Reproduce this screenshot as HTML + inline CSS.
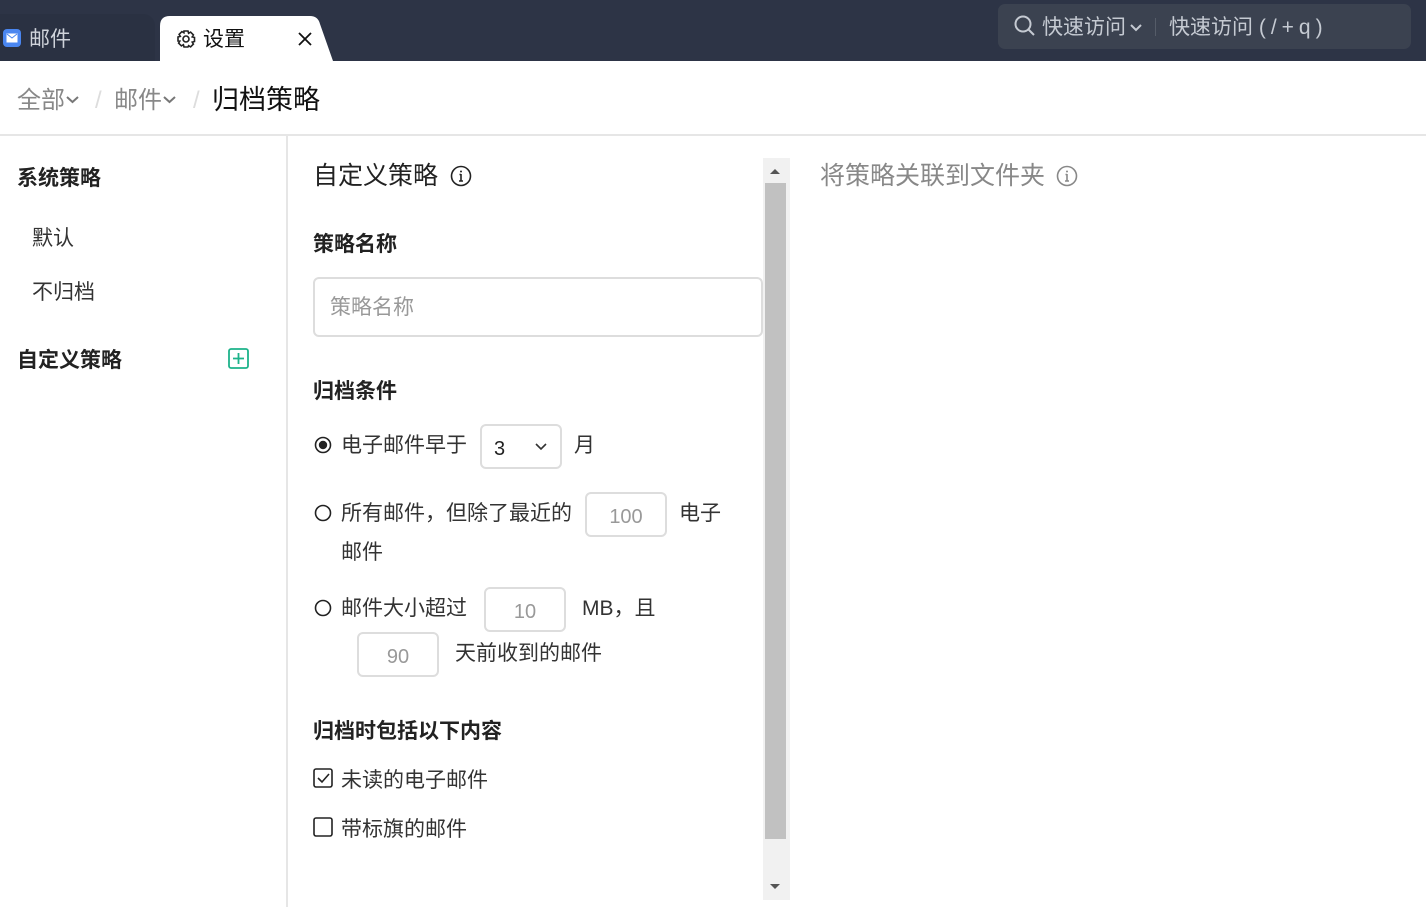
<!DOCTYPE html>
<html><head><meta charset="utf-8"><style>
*{margin:0;padding:0;box-sizing:border-box}
body{width:1426px;height:907px;overflow:hidden;background:#fff;font-family:"Liberation Sans","Noto Sans CJK SC",sans-serif;color:#222;position:relative}
.a{position:absolute;white-space:nowrap}
.top{position:absolute;left:0;top:0;width:1426px;height:61px;background:#2d3446}
.inp{position:absolute;border:2px solid #ddd;border-radius:6px;background:#fff;color:#999;font-size:20px;text-align:center}
.h{font-weight:bold;font-size:21px;color:#222;line-height:24px;margin-top:2px}
.t{font-size:21px;color:#333;line-height:24px;margin-top:2px}
</style></head><body>
<div class="top"></div>
<div class="a" style="left:0;top:14px;width:155px;height:47px;background:#2a3142;border-radius:0 12px 0 0"></div>
<div class="a" style="left:3px;top:29px;width:18px;height:18px;background:#4a86f0;border-radius:4px"></div>
<svg class="a" style="left:6px;top:33px" width="12" height="10"><rect x="0.5" y="0.5" width="11" height="9" fill="#fff"/><path d="M1 1l5 4 5-4" stroke="#4a86f0" fill="none"/></svg>
<div class="a" style="left:29px;top:28px;font-size:21px;line-height:24px;color:#cfd3da">邮件</div>
<svg class="a" style="left:160px;top:16px" width="175" height="45"><path d="M0 45V10Q0 0 10 0H150Q158 0 160 8L173 45Z" fill="#fff"/></svg>
<svg class="a" style="left:176px;top:29px" width="20" height="20" viewBox="0 0 20 20" fill="none" stroke="#222" stroke-width="1.6"><circle cx="10" cy="10" r="3"/><path d="M8 2h4l.6 2.3 2-1.2 2.8 2.8-1.2 2 2.3.6v4l-2.3.6 1.2 2-2.8 2.8-2-1.2L12 18H8l-.6-2.3-2 1.2-2.8-2.8 1.2-2L2 12V8l2.3-.6-1.2-2 2.8-2.8 2 1.2z"/></svg>
<div class="a" style="left:203px;top:28px;font-size:21px;line-height:24px;color:#111">设置</div>
<svg class="a" style="left:298px;top:32px" width="14" height="14"><path d="M1 1L13 13M13 1L1 13" stroke="#111" stroke-width="1.8"/></svg>
<div class="a" style="left:998px;top:4px;width:413px;height:45px;background:#3b4250;border-radius:7px"></div>
<svg class="a" style="left:1014px;top:15px" width="22" height="22" fill="none" stroke="#c5cad2" stroke-width="2"><circle cx="9" cy="9" r="7.5"/><path d="M14.5 14.5L20 20"/></svg>
<div class="a" style="left:1042px;top:16px;font-size:21px;line-height:24px;color:#c5cad2">快速访问</div>
<svg class="a" style="left:1130px;top:24px" width="12" height="8"><path d="M1 1l5 5 5-5" stroke="#c5cad2" stroke-width="2" fill="none"/></svg>
<div class="a" style="left:1155px;top:18px;width:1px;height:18px;background:#555c68"></div>
<div class="a" style="left:1169px;top:16px;font-size:21px;line-height:24px;color:#c5cad2">快速访问 <span style="letter-spacing:5px">(/+q)</span></div>

<div class="a" style="left:17px;top:87px;font-size:24px;line-height:28px;color:#888">全部</div>
<svg class="a" style="left:66px;top:96px" width="13" height="8"><path d="M1 1l5.5 5 5.5-5" stroke="#777" stroke-width="2" fill="none"/></svg>
<div class="a" style="left:95px;top:87px;font-size:24px;line-height:28px;color:#ddd">/</div>
<div class="a" style="left:114px;top:87px;font-size:24px;line-height:28px;color:#888">邮件</div>
<svg class="a" style="left:163px;top:96px" width="13" height="8"><path d="M1 1l5.5 5 5.5-5" stroke="#777" stroke-width="2" fill="none"/></svg>
<div class="a" style="left:193px;top:87px;font-size:24px;line-height:28px;color:#ddd">/</div>
<div class="a" style="left:212px;top:84px;font-size:27px;line-height:32px;color:#111">归档策略</div>
<div class="a" style="left:0;top:134px;width:1426px;height:2px;background:#e6e6e6"></div>
<div class="a" style="left:286px;top:136px;width:2px;height:771px;background:#e6e6e6"></div>

<div class="a h" style="left:17px;top:165px">系统策略</div>
<div class="a t" style="left:32px;top:225px">默认</div>
<div class="a t" style="left:32px;top:279px">不归档</div>
<div class="a h" style="left:17px;top:347px">自定义策略</div>
<svg class="a" style="left:228px;top:348px" width="21" height="21" fill="none" stroke="#1db38a" stroke-width="1.8"><rect x="1" y="1" width="19" height="19" rx="2"/><path d="M10.5 5v11M5 10.5h11"/></svg>

<div class="a" style="left:313px;top:161px;font-size:25px;line-height:30px;color:#222">自定义策略</div>
<svg class="a" style="left:450px;top:165px" width="22" height="22" fill="none" stroke="#222" stroke-width="1.6"><circle cx="11" cy="11" r="9.5"/><circle cx="11" cy="6.5" r="1" fill="#222" stroke="none"/><path d="M11 9v7M9 16h4M9.5 9.5H11"/></svg>
<div class="a h" style="left:313px;top:231px">策略名称</div>
<div class="inp" style="left:313px;top:277px;width:450px;height:60px;text-align:left;padding:17px 15px;font-size:21px;line-height:24px;color:#999">策略名称</div>
<div class="a h" style="left:313px;top:378px">归档条件</div>

<svg class="a" style="left:314px;top:436px" width="18" height="18"><circle cx="9" cy="9" r="7.5" fill="none" stroke="#222" stroke-width="1.6"/><circle cx="9" cy="9" r="4.2" fill="#222"/></svg>
<div class="a t" style="left:341px;top:432px">电子邮件早于</div>
<div class="inp" style="left:480px;top:424px;width:82px;height:45px;text-align:left;padding:11px 12px;color:#222;line-height:24px">3</div>
<svg class="a" style="left:535px;top:443px" width="12" height="8"><path d="M1 1l5 5 5-5" stroke="#333" stroke-width="1.6" fill="none"/></svg>
<div class="a t" style="left:574px;top:432px">月</div>

<svg class="a" style="left:314px;top:504px" width="18" height="18"><circle cx="9" cy="9" r="7.5" fill="none" stroke="#222" stroke-width="1.6"/></svg>
<div class="a t" style="left:341px;top:500px">所有邮件，但除了最近的</div>
<div class="inp" style="left:585px;top:492px;width:82px;height:45px;padding-top:11px;line-height:24px">100</div>
<div class="a t" style="left:679px;top:500px">电子</div>
<div class="a t" style="left:341px;top:539px">邮件</div>

<svg class="a" style="left:314px;top:599px" width="18" height="18"><circle cx="9" cy="9" r="7.5" fill="none" stroke="#222" stroke-width="1.6"/></svg>
<div class="a t" style="left:341px;top:595px">邮件大小超过</div>
<div class="inp" style="left:484px;top:587px;width:82px;height:45px;padding-top:11px;line-height:24px">10</div>
<div class="a t" style="left:582px;top:595px">MB，且</div>
<div class="inp" style="left:357px;top:632px;width:82px;height:45px;padding-top:11px;line-height:24px">90</div>
<div class="a t" style="left:455px;top:640px">天前收到的邮件</div>

<div class="a h" style="left:313px;top:718px">归档时包括以下内容</div>
<svg class="a" style="left:313px;top:768px" width="21" height="21" fill="none" stroke="#222" stroke-width="1.6"><rect x="1" y="1" width="18" height="18" rx="2"/><path d="M5 10l4 4 7-8"/></svg>
<div class="a t" style="left:341px;top:767px">未读的电子邮件</div>
<svg class="a" style="left:313px;top:817px" width="21" height="21" fill="none" stroke="#222" stroke-width="1.6"><rect x="1" y="1" width="18" height="18" rx="2"/></svg>
<div class="a t" style="left:341px;top:816px">带标旗的邮件</div>

<div class="a" style="left:763px;top:158px;width:27px;height:742px;background:#f1f1f1"></div>
<div class="a" style="left:765px;top:183px;width:21px;height:656px;background:#c1c1c1"></div>
<svg class="a" style="left:769px;top:167px" width="12" height="8"><path d="M1 7L6 2 11 7Z" fill="#555"/></svg>
<svg class="a" style="left:769px;top:883px" width="12" height="8"><path d="M1 1L6 6 11 1Z" fill="#555"/></svg>

<div class="a" style="left:820px;top:161px;font-size:25px;line-height:30px;color:#888">将策略关联到文件夹</div>
<svg class="a" style="left:1056px;top:165px" width="22" height="22" fill="none" stroke="#888" stroke-width="1.6"><circle cx="11" cy="11" r="9.5"/><circle cx="11" cy="6.5" r="1" fill="#888" stroke="none"/><path d="M11 9v7M9 16h4M9.5 9.5H11"/></svg>
</body></html>
